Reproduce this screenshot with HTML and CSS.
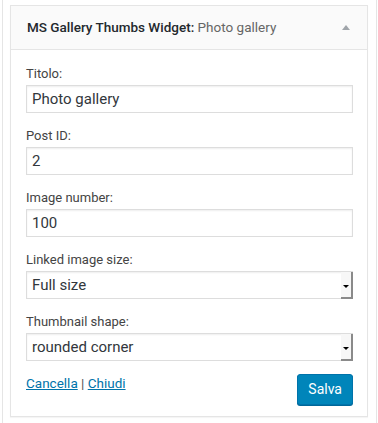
FILE: index.html
```html
<!DOCTYPE html>
<html lang="it">
<head>
    <meta charset="UTF-8">
    <title>MS Gallery Thumbs Widget</title>
    <link rel="stylesheet" href="styles.css">
</head>
<body>

    <div class="sidebar">
        <div class="widget">
            <div class="widget-top">
                <h3>MS Gallery Thumbs Widget<span class="in-title">: <span>Photo gallery</span></span></h3>
                <span class="toggle"></span>
            </div>

            <form class="widget-inside">
                <div class="field">
                    <label for="title">Titolo:</label>
                    <input id="title" type="text" value="Photo gallery">
                </div>
                <div class="field">
                    <label for="post">Post ID:</label>
                    <input id="post" type="text" value="2">
                </div>
                <div class="field">
                    <label for="num">Image number:</label>
                    <input id="num" type="text" value="100">
                </div>
                <div class="field">
                    <label for="size">Linked image size:</label>
                    <div class="select-wrap">
                        <select id="size">
                            <option>Full size</option>
                            <option>Large</option>
                            <option>Medium</option>
                        </select>
                    </div>
                </div>
                <div class="field">
                    <label for="shape">Thumbnail shape:</label>
                    <div class="select-wrap">
                        <select id="shape">
                            <option>rounded corner</option>
                            <option>square</option>
                            <option>circle</option>
                        </select>
                    </div>
                </div>

                <div class="widget-control">
                    <div class="links">
                        <a href="#">Cancella</a> | <a href="#">Chiudi</a>
                    </div>
                    <button type="button" class="button-primary">Salva</button>
                </div>
            </form>
        </div>
    </div>

</body>
</html>
```

FILE: styles.css
```css
:root {
    --border: #e5e5e5;
    --text: #23282d;
    --link: #0073aa;
}

body {
    margin: 0;
    font-family: Roboto, 'Open Sans', sans-serif;
    color: var(--text);
    background: #fff;
}

.sidebar {
    margin: 0 1px 0 2px;
    height: 423px;
    border-left: 1px solid var(--border);
    border-right: 1px solid var(--border);
    padding: 5px 8px 0 7px;
    box-sizing: border-box;
}

.widget {
    border: 1px solid var(--border);
    background: #fff;
    box-shadow: 0 1px 1px rgba(0,0,0,0.04);
}

.widget-top {
    display: flex;
    align-items: center;
    justify-content: space-between;
    height: 43px;
    padding: 0 16px 0 16px;
    background: #fafafa;
    border-bottom: 1px solid var(--border);
}

.widget-top h3 {
    margin: 0;
    font-size: 13.5px;
    font-weight: 500;
    line-height: 1;
    padding-top: 1px;
}

.in-title span {
    font-weight: 400;
    color: #666;
}

.toggle {
    width: 0;
    height: 0;
    border-left: 4px solid transparent;
    border-right: 4px solid transparent;
    border-bottom: 5px solid #a0a5aa;
    margin-right: 1px;
}

.widget-inside {
    padding: 14px 14px 11px 15px;
}

.field {
    margin-bottom: 13px;
}

.field label {
    display: block;
    font-size: 13px;
    line-height: 19px;
    color: #444;
    margin-bottom: 2px;
}

.field input,
.field select {
    display: block;
    width: 100%;
    box-sizing: border-box;
    height: 28px;
    margin: 0;
    padding: 0 5px;
    font-family: Roboto, 'Open Sans', sans-serif;
    font-size: 15px;
    color: #32373c;
    background: #fff;
    border: 1px solid #ddd;
    box-shadow: inset 0 1px 2px rgba(0,0,0,0.07);
    outline: none;
}

.select-wrap {
    position: relative;
}

.field select {
    appearance: none;
    -webkit-appearance: none;
    border-radius: 0;
    padding-right: 20px;
}

/* the little native-looking drop button */
.select-wrap::after {
    content: '';
    position: absolute;
    top: 1px;
    right: 0;
    width: 10px;
    height: 25px;
    background: #f7f7f7;
    border-right: 2px solid #8a8a8a;
    border-bottom: 2px solid #8a8a8a;
    pointer-events: none;
}

.select-wrap::before {
    content: '';
    position: absolute;
    top: 14px;
    right: 4px;
    width: 0;
    height: 0;
    border-left: 3px solid transparent;
    border-right: 3px solid transparent;
    border-top: 3px solid #000;
    z-index: 1;
    pointer-events: none;
}

.widget-control {
    display: flex;
    justify-content: space-between;
    align-items: flex-start;
    margin-top: 13px;
}

.links {
    font-size: 13.5px;
    line-height: 19px;
    color: #555;
}

.links a {
    color: var(--link);
}

.button-primary {
    height: 31px;
    padding: 0 10px 1px;
    font-family: Roboto, 'Open Sans', sans-serif;
    font-size: 14px;
    color: #fff;
    background: #0085ba;
    border: 1px solid #0073aa;
    border-radius: 3px;
    box-shadow: 0 1px 0 #006799;
    cursor: pointer;
}
```
